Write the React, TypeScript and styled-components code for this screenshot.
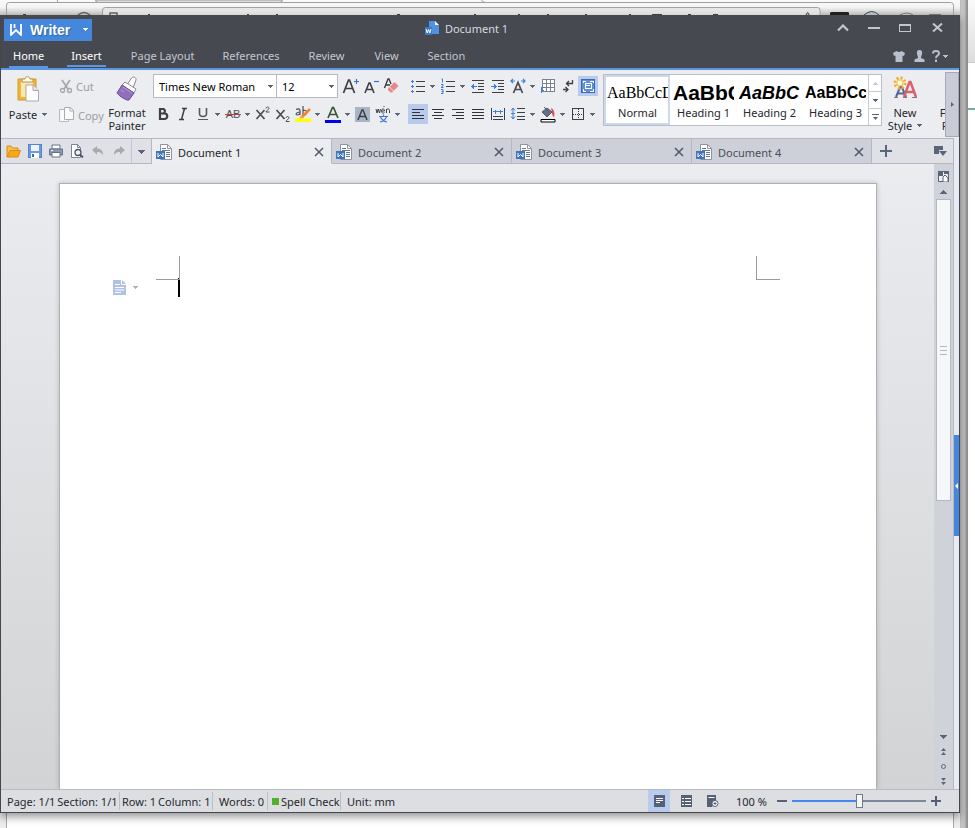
import React from "react";
import styled, { createGlobalStyle, css } from "styled-components";

const ui = `"Noto Sans", "DejaVu Sans", sans-serif`;
const ink = "#26282d";
const slate = "#5b6579";
const blue = "#3f7fd8";

const GlobalStyle = createGlobalStyle`
  *, *::before, *::after { box-sizing: border-box; }
  body { margin: 0; font: 11px/13px ${ui}; color: ${ink}; background: #fff; overflow: hidden; }
  button, select, input { font: inherit; color: inherit; margin: 0; padding: 0; border: 0; background: none; }
  svg { display: block; flex: none; }
`;

/* ---------- desktop behind the window ---------- */

const Desktop = styled.div`
  position: relative;
  display: flex;
  height: 100vh;
  padding: 15px 15px 15px 0;
`;

const Backdrop = styled.div`
  position: absolute;
  inset: 0;
  display: flex;
  background: linear-gradient(90deg, #9a9a9a, #c6c6c6 2px, #bdbdbd 6px, #9a9a9a 7px) right 8px top 0 / 8px 100% no-repeat, #fff;
`;

const BackBrowser = styled.div`
  flex: 1;
  display: flex;
  flex-direction: column;
  margin-right: 15px;
  background: #ececec;
`;

const BackTop = styled.div`
  height: 60px;
  background: linear-gradient(#fafafa, #f4f4f4 7px, #c4c4c4 15px);
`;

const BackPage = styled.div`
  flex: 1;
  margin: 0 6px 0 6px;
  border: solid #a8a8a8;
  border-width: 0 1px;
  background: #fff;
`;

const BackSide = styled.div`
  position: absolute;
  top: 0;
  right: 0;
  bottom: 0;
  width: 8px;
  border-left: 1px solid #8f8f8f;
  background: linear-gradient(#fafafa, #ddd 62px, #999 62px, #fff 63px, #fff 108px, #6fae98 108px, #6fae98 110px, #fff 110px);
`;

const BackArt = styled.svg`
  position: absolute;
  top: 0;
  left: 0;
`;

const Window = styled.main`
  position: relative;
  flex: 1;
  min-width: 0;
  display: flex;
  flex-direction: column;
  border: 1px solid #44474f;
  border-top: 0;
  background: #ebedf0;
  box-shadow: 0 4px 8px rgba(0, 0, 0, 0.4);
`;

/* ---------- title and menus ---------- */

const Header = styled.header`
  background: #464950;
  border-bottom: 2px solid #5a96e4;
  color: #d6d9e0;
`;

const TitleBar = styled.div`
  display: grid;
  grid-template-columns: 1fr auto 1fr;
  align-items: center;
  height: 29px;
  padding: 0 4px 0 3px;
`;

const WriterButton = styled.button`
  display: flex;
  align-items: center;
  width: 88px;
  height: 22px;
  padding: 0 4px 0 6px;
  background: #4487dc;
  color: #fff;
  font: bold 14px/20px "Liberation Sans", sans-serif;
  text-shadow: 1px 1px 1px #33689f;
  span { flex: 1; padding-left: 8px; text-align: left; }
`;

const Caption = styled.h1`
  display: flex;
  align-items: center;
  gap: 5px;
  margin: 0 26px 2px 0;
  font: inherit;
`;

const WindowControls = styled.div`
  display: flex;
  justify-content: flex-end;
  margin-bottom: 4px;
  color: #c0c5d0;
`;

const ControlButton = styled.button<{ $w?: number }>`
  display: flex;
  align-items: center;
  justify-content: center;
  width: ${(p) => p.$w ?? 31}px;
  height: 22px;
`;

const MenuBar = styled.nav`
  display: flex;
  align-items: stretch;
  height: 24px;
  padding: 0 8px 0 8px;
`;

const MenuItem = styled.button<{ $on?: boolean; $gap: number }>`
  height: 24px;
  padding: 2px 4px 1px;
  margin-right: ${(p) => p.$gap}px;
  white-space: nowrap;
  color: ${(p) => (p.$on ? "#fff" : "#c3c7d0")};
  border-bottom: 2px solid ${(p) => (p.$on ? "#5a96e4" : "transparent")};
  &:nth-of-type(2) { height: 23px; }
`;

const MenuTools = styled.div`
  display: flex;
  align-items: center;
  margin-left: auto;
  color: #b9bfcc;
`;

/* ---------- ribbon ---------- */

const Ribbon = styled.section`
  display: flex;
  height: 68px;
  background: #ebedf0;
`;

const RibbonBody = styled.div`
  flex: 1;
  min-width: 0;
  display: flex;
  align-items: flex-start;
  overflow: hidden;
  padding-top: 4px;
  > * { flex: none; }
`;

const BigButton = styled.button<{ $w: number; $gap?: number }>`
  display: flex;
  flex-direction: column;
  align-items: center;
  width: ${(p) => p.$w}px;
  padding-top: 2px;
  gap: ${(p) => p.$gap ?? 4}px;
  white-space: nowrap;
`;

const BigLabel = styled.span`
  display: flex;
  align-items: center;
  gap: 5px;
`;

const Lines = styled.span`
  display: flex;
  flex-direction: column;
  align-items: center;
`;

const ClipColumn = styled.div`
  display: flex;
  flex-direction: column;
  gap: 5px;
  width: 46px;
  margin-left: 4px;
`;

const ClipButton = styled.button`
  display: flex;
  align-items: center;
  gap: 3px;
  height: 24px;
  color: #9a9da4;
`;

const PainterButton = styled(BigButton)`
  margin-right: 4px;
`;

const Group = styled.div<{ $gap?: number }>`
  display: flex;
  flex-direction: column;
  gap: 6px;
  margin-right: ${(p) => p.$gap ?? 0}px;
`;

const ToolRow = styled.div<{ $h: number }>`
  display: flex;
  align-items: center;
  height: ${(p) => p.$h}px;
`;

const ToolButton = styled.button<{ $on?: boolean }>`
  display: flex;
  align-items: center;
  justify-content: center;
  width: 20px;
  height: 20px;
  background: ${(p) => (p.$on ? "#b9cbec" : "none")};
`;

const DropButton = styled.button`
  display: flex;
  align-items: center;
  width: 10px;
  height: 20px;
  padding-left: 2px;
`;

const Combo = styled.label<{ $w: number }>`
  display: grid;
  align-items: center;
  width: ${(p) => p.$w}px;
  height: 24px;
  border: 1px solid #b5bac5;
  background: #fff;
  & + & { border-left: 0; margin-right: 3px; }
  > * { grid-area: 1 / 1; }
  svg { justify-self: end; margin-right: 3px; pointer-events: none; }
  select { appearance: none; width: 100%; height: 22px; padding-left: 5px; outline: 0; color: #000; }
`;

const Gallery = styled.div`
  display: flex;
  height: 52px;
  border: 1px solid #b9bdc6;
  background: #fff;
`;

const StyleCell = styled.button<{ $on?: boolean }>`
  display: flex;
  flex-direction: column;
  width: 66px;
  height: 50px;
  padding: 2px 0 0 1px;
  border: 2px solid ${(p) => (p.$on ? "#c9d9f2" : "transparent")};
`;

const Sample = styled.span<{ $font: string }>`
  width: 100%;
  height: 27px;
  overflow: hidden;
  text-align: left;
  color: #000;
  font: ${(p) => p.$font};
`;

const CellName = styled.span`
  width: 100%;
  text-align: center;
  white-space: nowrap;
`;

const GalleryScroll = styled.div`
  display: flex;
  flex-direction: column;
  width: 13px;
  border-left: 1px solid #c6cad2;
  button { flex: 1; display: grid; place-items: center; }
  button + button { border-top: 1px solid #c6cad2; }
`;

const Expander = styled.button`
  display: grid;
  place-items: center;
  width: 14px;
  margin: 2px 0 1px;
  border: 1px solid #a5aab6;
  background: #c9ccd6;
`;

/* ---------- document tabs ---------- */

const Body = styled.div`
  flex: 1;
  min-height: 0;
  display: flex;
`;

const Main = styled.div`
  flex: 1;
  min-width: 0;
  display: flex;
  flex-direction: column;
`;

const TabRow = styled.div`
  display: flex;
  height: 26px;
  border-top: 1px solid #b4b8c2;
`;

const bar = css`
  background: #dfe1e6;
  border-bottom: 1px solid #b4b8c2;
`;

const QuickAccess = styled.div`
  ${bar}
  display: flex;
  width: 151px;
  padding-left: 2px;
  border-right: 1px solid #b4b8c2;
  button { width: 21px; height: 24px; display: grid; place-items: center; }
  button:last-child { width: 19px; height: 25px; border-left: 1px solid #c2c6cf; margin-left: 2px; }
`;

const Tab = styled.div<{ $on?: boolean }>`
  flex: 0 1 180px;
  display: flex;
  align-items: center;
  min-width: 0;
  padding: 2px 6px 0 4px;
  border-right: 1px solid #b4b8c2;
  border-bottom: 1px solid ${(p) => (p.$on ? "#ebedf0" : "#b4b8c2")};
  background: ${(p) => (p.$on ? "#ebedf0" : "#cdd0d8")};
  color: ${(p) => (p.$on ? ink : "#4b4e55")};
`;

const TabTitle = styled.button`
  flex: 1;
  display: flex;
  align-items: center;
  gap: 6px;
  white-space: nowrap;
`;

const IconButton = styled.button<{ $w: number }>`
  display: grid;
  place-items: center;
  width: ${(p) => p.$w}px;
  height: 24px;
`;

const TabEnd = styled.div`
  ${bar}
  flex: 1;
  display: flex;
  justify-content: space-between;
  border-right: 1px solid #b4b8c2;
`;

/* ---------- document ---------- */

const Work = styled.div`
  flex: 1;
  min-height: 0;
  display: flex;
`;

const Canvas = styled.div`
  flex: 1;
  display: flex;
  padding: 19px 57px 0 58px;
  overflow: hidden;
  background: linear-gradient(#ebecef, #d2d3d5);
`;

const Page = styled.article`
  position: relative;
  flex: 1;
  padding: 72px 96px 0;
  border: 1px solid #afb0b4;
  border-bottom: 0;
  background: #fff;
  box-shadow: 0 0 5px rgba(0, 0, 0, 0.2);
`;

const Margins = styled.div`
  display: flex;
  justify-content: space-between;
`;

const Corner = styled.span<{ $right?: boolean }>`
  width: 24px;
  height: 24px;
  border: solid #9b9b9b;
  border-width: ${(p) => (p.$right ? "0 0 1px 1px" : "0 1px 1px 0")};
`;

const Caret = styled.div`
  width: 24px;
  height: 19px;
  margin-top: -2px;
  border-right: 2px solid #000;
`;

const SmartTag = styled.button`
  position: absolute;
  top: 96px;
  left: 53px;
  display: flex;
  align-items: center;
  gap: 7px;
`;

const ScrollColumn = styled.div`
  display: flex;
  flex-direction: column;
  align-items: center;
  width: 20px;
  padding-top: 5px;
  border-right: 1px solid #b4b8c2;
  background: #d0d2d9;
  button { display: grid; place-items: center; width: 15px; height: 15px; }
`;

const ScrollTrack = styled.div`
  flex: 1;
  width: 15px;
`;

const ScrollThumb = styled.div`
  display: flex;
  flex-direction: column;
  align-items: center;
  justify-content: center;
  gap: 3px;
  height: 57%;
  border: 1px solid #b6b8bf;
  background: #f6f7f9;
  i { width: 7px; height: 1px; background: #b6b8bf; }
`;

const SideStrip = styled.aside`
  display: flex;
  flex-direction: column;
  justify-content: center;
  width: 5px;
  padding-top: 44px;
  background: #e9ebf2;
  button { height: 101px; background: #4487dc; display: grid; place-items: center; }
`;

/* ---------- status bar ---------- */

const Status = styled.footer`
  display: flex;
  align-items: center;
  height: 23px;
  padding: 0 17px 0 0;
  border-top: 1px solid #b9bbc2;
  background: #dcdee2;
  white-space: nowrap;
`;

const StatusItem = styled.span<{ $w: number; $pad: number }>`
  display: flex;
  align-items: center;
  gap: 2px;
  width: ${(p) => p.$w}px;
  height: 18px;
  padding-left: ${(p) => p.$pad}px;
  border-right: 1px solid #bcbfc6;
  &:last-of-type { border-right: 0; }
`;

const Led = styled.i`
  width: 7px;
  height: 7px;
  background: #52b02c;
`;

const StatusTools = styled.div`
  display: flex;
  align-items: center;
  margin-left: auto;
`;

const ViewButton = styled.button<{ $on?: boolean }>`
  display: grid;
  place-items: center;
  width: 22px;
  height: 22px;
  margin-right: 5px;
  background: ${(p) => (p.$on ? "#b9cbec" : "none")};
`;

const ZoomLabel = styled.output`
  width: 40px;
  margin-left: 7px;
`;

const Zoom = styled.input`
  appearance: none;
  width: 134px;
  height: 14px;
  margin: 0 4px;
  background: linear-gradient(90deg, #4487ee 50%, #7c8797 50%) center / 100% 2px no-repeat;
  &::-webkit-slider-thumb {
    appearance: none;
    width: 7px;
    height: 14px;
    border: 1px solid #747b88;
    background: #f7f7f8;
  }
`;

/* ---------- icons ---------- */

const Svg = ({ w = 16, h = w, crisp = false, children }: { w?: number; h?: number; crisp?: boolean; children: React.ReactNode }) => (
  <svg width={w} height={h} viewBox={`0 0 ${w} ${h}`} fill="none" aria-hidden="true" shapeRendering={crisp ? "crispEdges" : undefined}>
    {children}
  </svg>
);

const Arrow = ({ c = slate }: { c?: string }) => (
  <Svg w={5} h={3} crisp><path d="M0 0h5v1H4v1H3v1H2V2H1V1H0z" fill={c} /></Svg>
);

const WideArrow = () => (
  <Svg w={7} h={4} crisp><path d="M0 0h7v1H6v1H5v1H4v1H3V3H2V2H1V1H0z" fill={slate} /></Svg>
);

const ArrowUp = ({ c = slate }: { c?: string }) => (
  <Svg w={7} h={4} crisp><path d="M0 4h7V3H6V2H5V1H4V0H3v1H2v1H1v1H0z" fill={c} /></Svg>
);

const PasteIcon = () => (
  <Svg w={24} h={26}>
    <path d="M2 3h18v21H2z" fill="#eeb63c" stroke="#d59b25" />
    <path d="M5 6h12v15H5z" fill="#fbe6ab" />
    <path d="M6 6V3h3c0-3 5-3 5 0h3v3z" fill="#fff" stroke="#b9933f" />
    <path d="M10 9h7l5.500 5.500V25H10z" fill="#fff" stroke="#a9a9a9" />
    <path d="M17 9v5.500h5.500" stroke="#a9a9a9" fill="#e8e8e8" />
  </Svg>
);
const CutIcon = () => (
  <Svg w={14} h={15}>
    <path d="M3 1l6 9M11 1L5 10" stroke="#a4a7ad" strokeWidth="1.7" />
    <circle cx="3.5" cy="11.5" r="2" stroke="#a4a7ad" strokeWidth="1.3" />
    <circle cx="10.5" cy="11.5" r="2" stroke="#a4a7ad" strokeWidth="1.3" />
  </Svg>
);
const CopyIcon = () => (
  <Svg w={16} h={16}>
    <path d="M.5 2.500h6l3 3v9h-9z" fill="#fafafa" stroke="#b4b7bd" />
    <path d="M5.500.5h6l3 3v9h-9z" fill="#fafafa" stroke="#a9acb2" />
    <path d="M11 .5v3.500h3.500" stroke="#a9acb2" />
  </Svg>
);
const PainterIcon = () => (
  <Svg w={22} h={26}>
    <path d="M11 9l4.500-7c1.500-2 5-.5 4.500 2l-3 8z" fill="#fdfdfd" stroke="#8d8a98" />
    <path d="M9 6l11 7-2 4L6 9z" fill="#fff" stroke="#8d8a98" />
    <path d="M6 9l12 8-5 7c-2 1-9-3-12-7z" fill="#8f70ba" stroke="#6e509c" />
    <path d="M7 11l9 6M5 14l3 2" stroke="#b79fd6" />
  </Svg>
);
const FontSizeIcon = ({ up }: { up?: boolean }) => (
  <Svg w={18} h={18}>
    {up
      ? <path d="M1.500 16L6.500 3h1l5 13M3.500 11.500h7" stroke="#3c3f45" strokeWidth="1.7" />
      : <path d="M3 16L7 6h1l4 10M4.500 12.500h6" stroke="#3c3f45" strokeWidth="1.6" />}
    <path d={up ? "M12 4.500h5M14.500 2v5" : "M12 4.500h5"} stroke="#3c6fc4" strokeWidth="1.2" />
  </Svg>
);
const EraserIcon = () => (
  <Svg w={16} h={16}>
    <path d="M1.500 10L5 1h1l2 5M3 7h4" stroke="#3c3f45" strokeWidth="1.4" />
    <path d="M5 10.500l6.500-6.500 4 4L9 14.500H7.500l-2.500-2.500z" fill="#e58a8a" />
    <path d="M6.500 9l4 4" stroke="#f7dcdc" />
  </Svg>
);
const ItalicIcon = () => <Svg w={12} h={14}><path d="M5 1.500h5M2 12.500h5M7.500 1.500l-3 11" stroke="#3c3f45" strokeWidth="1.5" /></Svg>;
const BoldIcon = () => <Svg w={12} h={14}><path d="M3 2h3.500a2.500 2.500 0 010 4.500H3zm0 4.500h4.500a2.700 2.700 0 010 5.500H3z" stroke="#3c3f45" strokeWidth="2.2" /></Svg>;
const UnderIcon = () => <Svg w={12} h={14}><path d="M2.500 1v5.500c0 4 7 4 7 0V1" stroke="#55585f" strokeWidth="1.6" /><path d="M1 12.500h10" stroke="#55585f" /></Svg>;
const Struck = styled.span`
  position: relative;
  color: #4a4d53;
  font: 11px/14px "Liberation Sans", sans-serif;
  &::after { content: ""; position: absolute; left: -1px; right: -1px; top: 7px; height: 1px; background: #d5383c; }
`;
const ScriptIcon = ({ sup }: { sup?: boolean }) => (
  <Svg w={16} h={16}>
    <path d="M1.500 4l8 9M9.500 4l-8 9" stroke="#4a4d53" strokeWidth="1.7" />
    <path d={sup ? "M11 2.500c0-2 3-2 3 0 0 1-3 2-3 3.500h3.500" : "M11 12c0-2 3-2 3 0 0 1-3 2-3 3.500h3.500"} stroke="#4a4d53" />
  </Svg>
);
const HighlightIcon = () => (
  <Svg w={16} h={16}>
    <path d="M1 3.500c3-1.500 4 0 4 1.500v4M5 6C1 6 0 9 2.500 9 4 9 5 8 5 7M8 0v9c5 .5 5-6 0-4.500" stroke="#4a4d53" strokeWidth="1.2" />
    <path d="M15 3L7 11" stroke="#ef8432" strokeWidth="2.5" />
    <path d="M4 13l2-4 3 3z" fill="#f6a84f" />
    <path d="M0 12.500h16V16H0z" fill="#ff0" />
  </Svg>
);
const ColorIcon = () => (
  <Svg w={16} h={17}>
    <path d="M3 12L7.500 1.500h1L13 12M4.500 8.500h7" stroke="#38563c" strokeWidth="1.7" />
    <path d="M0 14h16v3H0z" fill="#0000f0" />
  </Svg>
);
const ShadeIcon = () => (
  <Svg w={16} h={16}>
    <path d="M0 1h15v15H0z" fill="#a9b4c6" />
    <path d="M3 14L7 4h1l4 10M4.500 10.500h6" stroke="#3c3f45" strokeWidth="1.5" />
  </Svg>
);
const WenIcon = () => (
  <Svg w={16} h={17}>
    <path d="M1 3l1 4 1.200-4L4.500 7l1-4M6.500 5h3c0-3-3-2.500-3 0s2 2.500 3 1.500M11.500 7V3M11.500 4c1-2 3-1 3 .5V7M8.500 1l1-1" stroke="#3c3f45" />
    <path d="M4 10.500h9M8.500 8.500v2M5.500 11c1.500 3 4 4.500 6.500 5M11.500 11c-1.500 3-4 4.500-6.500 5" stroke="#4478cc" strokeWidth="1.2" />
  </Svg>
);
const BulletsIcon = () => (
  <Svg w={16} h={16} crisp>
    <path d="M6 3.500h9M6 8.500h9M6 13.500h9" stroke="#3c3f45" />
    <path d="M1 3.500h3M2.500 2v3M1 8.500h3M2.500 7v3M1 13.500h3M2.500 12v3" stroke={blue} />
  </Svg>
);
const NumbersIcon = () => (
  <Svg w={16} h={16}>
    <path d="M6 3.500h9M6 8.500h9M6 13.500h9" stroke="#3c3f45" />
    <path d="M1.500 1h1v3.500M1 6.500h2v1.500l-2 1.500h2.500M1 11.500h2v4H1M1.500 13.500H3" stroke={blue} />
  </Svg>
);
const IndentIcon = ({ out }: { out?: boolean }) => (
  <Svg w={14} h={14} crisp>
    <path d="M1 1.500h12M7 4.500h6M7 7.500h6M7 10.500h6M1 13.500h12" stroke="#3c3f45" />
    <path d={out ? "M0 7.500h6M2.500 5v5M1.500 6v3" : "M0 7.500h6M3.500 5v5M4.500 6v3"} stroke={blue} />
  </Svg>
);
const SpreadIcon = () => (
  <Svg w={16} h={16}>
    <path d="M3.500 15L8 4.500 12.500 15M5 11.500h6" stroke="#4a4d53" strokeWidth="1.7" />
    <path d="M1 3h4M3 1L1 3l2 2M11 3h4M13 1l2 2-2 2" stroke={blue} strokeWidth="1.2" />
  </Svg>
);
const TableIcon = () => (
  <Svg w={16} h={16} crisp>
    <path d="M2 1.500h12v12H2zM2 5.500h12M2 9.500h12M6.500 1v12M10.500 1v12" stroke="#7a8290" fill="#fff" />
    <path d="M1.500 15V9.500H6M1.500 12H4" stroke={blue} />
  </Svg>
);
const BreakIcon = () => (
  <Svg w={14} h={16}>
    <path d="M11.500 2v3.500H6M8 3L5.500 5.500 8 8M2 11.500h5M4.500 9L7 11.500 4.500 14" stroke="#3c3f45" strokeWidth="1.3" />
  </Svg>
);
const FrameIcon = () => (
  <Svg w={16} h={16} crisp>
    <path d="M1.500 1.500h13v13h-13z" stroke="#3a69b5" fill="#5d8fd8" />
    <path d="M3 5V3h3M10 3h3v2M3 11v2h3M10 13h3v-2M5 5.500h6v5H5zM6 7.500h4" stroke="#fff" />
  </Svg>
);
const AlignIcon = ({ d }: { d: string }) => <Svg w={12} h={12} crisp><path d={d} stroke="#2f3237" /></Svg>;
const DistributeIcon = () => (
  <Svg w={16} h={14} crisp>
    <path d="M1.500 1v12M14.500 1v12M3 9.500h10M3 12.500h10" stroke="#3c3f45" />
    <path d="M3 4.500h10M5.500 2.500v4M10.500 2.500v4" stroke={blue} />
  </Svg>
);
const SpacingIcon = () => (
  <Svg w={16} h={14}>
    <path d="M7 1.500h8M7 5.500h8M7 9.500h8M7 12.500h8" stroke="#3c3f45" />
    <path d="M3 1v11M1 3.500L3 1l2 2.500M1 9.500L3 12l2-2.500M1 6.500h4" stroke={blue} />
  </Svg>
);
const FillIcon = () => (
  <Svg w={16} h={17}>
    <path d="M2 6l5-4 5 4-5 5z" fill="#66718a" stroke="#515b70" />
    <path d="M4 1l4 4" stroke="#515b70" />
    <path d="M11 2c3 1 4 5 3 9-2-1-2-4-2-5z" fill="#d8504f" />
    <path d="M1 13.500h14v2.500H1z" fill="#fff" stroke="#000" />
  </Svg>
);
const BorderIcon = () => (
  <Svg w={14} h={14} crisp>
    <path d="M1.500 1.500h11v11h-11z" stroke="#3c3f45" />
    <path d="M7 2v10M2 7h10" stroke="#3c3f45" strokeDasharray="1 1" />
  </Svg>
);
const NewStyleIcon = () => (
  <Svg w={24} h={26}>
    <path d="M3 21L7.500 10h1L13 21M5 17.500h6" stroke="#4f6795" strokeWidth="2" />
    <path d="M11 21l5.500-15h1L23 21M13.500 16h7" stroke="#d9616d" strokeWidth="2.5" />
    <path d="M1 21.500h4M10 21.500h4M19 21.500h5" stroke="#8c6c88" />
    <circle cx="7" cy="7" r="5" stroke="#f2ab2c" strokeWidth="3" strokeDasharray="2 1.9" />
    <circle cx="7" cy="7" r="3" fill="#fff7d6" stroke="#f5c451" />
  </Svg>
);
const WordDoc = () => (
  <Svg w={16} h={17}>
    <path d="M4.500.5h7l4 4v11h-11z" fill="#fff" stroke="#8b93a3" />
    <path d="M11.500.5v4h4" stroke="#8b93a3" />
    <path d="M6 4.500h4M6 6.500h8M10 8.500h4M10 10.500h4M10 12.500h4" stroke="#6d7789" />
    <path d="M0 7h9v8H0z" fill="#3f75bf" />
    <path d="M2 9v4l2.500-2.500L7 13V9" stroke="#fff" />
  </Svg>
);
const AppDoc = () => (
  <Svg w={15} h={15}>
    <path d="M4 0h6l4 4v9H4z" fill="#4f92e2" />
    <path d="M10 0v4h4z" fill="#fff" />
    <path d="M0 6h7v8H0z" fill="#3c78c8" />
    <path d="M1 8l1.200 4 1.300-3.500L4.800 12 6 8" stroke="#fff" />
  </Svg>
);
const FolderIcon = () => (
  <Svg w={15} h={13}>
    <path d="M1 12V1h4l1.500 2H12v3" fill="#f6c04f" stroke="#d88d14" />
    <path d="M1 12L4 5.500h10.500L12 12z" fill="#f8a81d" stroke="#dd8a10" />
  </Svg>
);
const SaveIcon = () => (
  <Svg w={14} h={14} crisp>
    <path d="M.5.5h13v13H.5z" fill="#6c9ae0" stroke="#5582c8" />
    <path d="M3 1h8v6H3z" fill="#eef3fb" /><path d="M3 9h8v5H3z" fill="#fff" /><path d="M4 10h2v3H4z" fill="#3c6cb4" />
  </Svg>
);
const PrintIcon = () => (
  <Svg w={14} h={14}>
    <path d="M3 1h8v4H3z" fill="#fff" stroke="#667084" />
    <path d="M.5 5h13v6H.5z" fill="#8a9ab6" stroke="#65728c" />
    <path d="M3 8.500h8v4.500H3z" fill="#fff" stroke="#667084" />
    <path d="M2 6.500h2" stroke="#fff" />
  </Svg>
);
const PreviewIcon = () => (
  <Svg w={14} h={14}>
    <path d="M1.500.5h6l3 3v10h-9z" fill="#fff" stroke="#7e8694" /><path d="M7.500.5v3h3" stroke="#7e8694" />
    <circle cx="8" cy="8.5" r="3" fill="#eef0f4" stroke="#4c5566" strokeWidth="1.3" /><path d="M10 10.500l3 3" stroke="#4c5566" strokeWidth="1.8" />
  </Svg>
);
const UndoIcon = ({ flip }: { flip?: boolean }) => (
  <Svg w={12} h={12}>
    <g transform={flip ? "matrix(-1 0 0 1 12 0)" : undefined}><path d="M0 5l5-4v2.500c4 0 6 2 6 7-1.500-3-3-3.500-6-3.500v2.500z" fill="#a5a9b1" /></g>
  </Svg>
);
const CloseIcon = () => <Svg w={10} h={10}><path d="M1 1l8 8M9 1L1 9" stroke="#4e586a" strokeWidth="1.5" /></Svg>;

const alignments: [string, string][] = [
  ["Align left", "M0 1.500h12M0 4.500h8M0 7.500h12M0 10.500h12"],
  ["Center", "M0 1.500h12M2 4.500h8M0 7.500h12M2 10.500h8"],
  ["Align right", "M0 1.500h12M4 4.500h8M0 7.500h12M4 10.500h8"],
  ["Justify", "M0 1.500h12M0 4.500h12M0 7.500h12M0 10.500h12"],
];

const menus: [string, number][] = [
  ["Home", 19], ["Insert", 21], ["Page Layout", 20], ["References", 21], ["Review", 22], ["View", 21], ["Section", 0],
];

const styles: [string, string, string][] = [
  ["Normal", "AaBbCcD", `16px/28px "Liberation Serif", serif`],
  ["Heading 1", "AaBbC", `bold 21px/28px "Liberation Sans", sans-serif`],
  ["Heading 2", "AaBbC", `italic bold 18px/28px "Liberation Sans", sans-serif`],
  ["Heading 3", "AaBbCc", `bold 16px/28px "Liberation Sans", sans-serif`],
];

const Tool = ({ name, drop, on, children }: { name: string; drop?: boolean; on?: boolean; children: React.ReactNode }) => (
  <>
    <ToolButton aria-label={name} $on={on}>{children}</ToolButton>
    {drop && <DropButton aria-label={`${name} options`}><Arrow /></DropButton>}
  </>
);

export default function App() {
  return (
    <Desktop>
      <GlobalStyle />
      <Backdrop aria-hidden="true">
        <BackBrowser><BackTop /><BackPage /></BackBrowser>
        <BackSide />
        <BackArt width="960" height="15" viewBox="0 0 960 15" fill="none">
          <path d="M6.500 15V5q0-2.500 3-2.500h941q3 0 3 3V15" stroke="#a0a0a0" />
          <path d="M57.500 0v2M95.500 0q0 2.500 3 2.500h181q3 0 3-2.500z" fill="#dcdde0" stroke="#a0a0a0" />
          <path d="M481.500 0q1 2.500 4 2.500H948" stroke="#a0a0a0" />
          <path d="M102.500 15V10q0-2.500 3-2.500h712q2.500 0 2.500 2.500v5" fill="#e6e6e6" stroke="#a0a0a0" />
          <path d="M78 15q6-5 12 0M110 15v-2h7v2" stroke="#666" strokeWidth="1.5" />
          <path d="M23 14.500h3M148 14.500h2M247 14.500h2M276 14.500h2M397 14.500h3M474 14.500h2M518 14.500h2M547 14.500h2M585 14.500h2M629 14.500h2M652 14.500h10M688 14.500h3M713 14.500h5" stroke="#444" />
          <path d="M830 15v-2q0-1 2-1h15q2 0 2 1v2z" fill="#222" />
          <path d="M864 15q8-7 15 0M806 15q2-5 3 0" stroke="#444" fill="#bcc3d0" />
          <path d="M900 15q7-4 13 0M929 14.500h12" stroke="#777" />
        </BackArt>
      </Backdrop>

      <Window>
        <Header>
          <TitleBar>
            <WriterButton>
              <Svg w={12} h={13}><path d="M1 1v11l5-5 5 5V1M4.500 1v4" stroke="#fff" strokeWidth="1.8" /></Svg>
              <span>Writer</span>
              <Arrow c="#fff" />
            </WriterButton>
            <Caption><AppDoc />Document 1</Caption>
            <WindowControls>
              <ControlButton $w={30} aria-label="Collapse ribbon"><Svg w={12} h={8}><path d="M1 6.500l5-5 5 5" stroke="currentColor" strokeWidth="2.2" /></Svg></ControlButton>
              <ControlButton aria-label="Minimize"><Svg w={12} h={2}><path d="M0 1h12" stroke="currentColor" strokeWidth="2" /></Svg></ControlButton>
              <ControlButton aria-label="Maximize"><Svg w={12} h={8} crisp><path d="M.5.5h11v7H.5zM0 1.500h12" stroke="currentColor" /></Svg></ControlButton>
              <ControlButton $w={35} aria-label="Close"><Svg w={11} h={9}><path d="M1 .5l9 8M10 .5l-9 8" stroke="currentColor" strokeWidth="2" /></Svg></ControlButton>
            </WindowControls>
          </TitleBar>
          <MenuBar>
            {menus.map(([m, gap], i) => <MenuItem key={m} $on={i < 2} $gap={gap}>{m}</MenuItem>)}
            <MenuTools>
              <ControlButton $w={20} aria-label="Skins"><Svg w={12} h={11}><path d="M3.500 0q2.500 2 5 0L12 2l-1 3-1.500-.5V11h-7V4.500L1 5 0 2z" fill="currentColor" /></Svg></ControlButton>
              <ControlButton $w={20} aria-label="Account"><Svg w={11} h={12}><path d="M5.500 0C8 0 8.500 2 8 4S7 6.500 7 8l3.500 1.500V12H.5V9.500L4 8c0-1.500-.5-2-1-4S3 0 5.500 0z" fill="currentColor" /></Svg></ControlButton>
              <ControlButton $w={22} aria-label="Help">
                <Svg w={8} h={12}><path d="M1 3.500c0-3.300 6-3.300 6 0 0 2-3 2.200-3 4.500M4 9.500V12" stroke="currentColor" strokeWidth="2" /></Svg>
                <Svg w={8} h={3} crisp><path d="M3 0h5v1H7v1H6v1H5V2H4V1H3z" fill="currentColor" /></Svg>
              </ControlButton>
            </MenuTools>
          </MenuBar>
        </Header>

        <Ribbon>
          <RibbonBody>
            <BigButton $w={54} $gap={6}><PasteIcon /><BigLabel>Paste<Arrow /></BigLabel></BigButton>
            <ClipColumn>
              <ClipButton disabled><CutIcon />Cut</ClipButton>
              <ClipButton disabled><CopyIcon />Copy</ClipButton>
            </ClipColumn>
            <PainterButton $w={44}><PainterIcon /><Lines><span>Format</span><span>Painter</span></Lines></PainterButton>
            <Group $gap={5}>
              <ToolRow $h={24}>
                <Combo $w={124}><select aria-label="Font"><option>Times New Roman</option></select><Arrow /></Combo>
                <Combo $w={61}><select aria-label="Font size"><option>12</option></select><Arrow /></Combo>
                <Tool name="Grow font"><FontSizeIcon up /></Tool>
                <Tool name="Shrink font"><FontSizeIcon /></Tool>
                <Tool name="Clear formatting"><EraserIcon /></Tool>
              </ToolRow>
              <ToolRow $h={20}>
                <Tool name="Bold"><BoldIcon /></Tool>
                <Tool name="Italic"><ItalicIcon /></Tool>
                <Tool name="Underline" drop><UnderIcon /></Tool>
                <Tool name="Strikethrough" drop><Struck>AB</Struck></Tool>
                <Tool name="Superscript"><ScriptIcon sup /></Tool>
                <Tool name="Subscript"><ScriptIcon /></Tool>
                <Tool name="Highlight" drop><HighlightIcon /></Tool>
                <Tool name="Font color" drop><ColorIcon /></Tool>
                <Tool name="Character shading"><ShadeIcon /></Tool>
                <Tool name="Phonetic guide" drop><WenIcon /></Tool>
              </ToolRow>
            </Group>
            <Group $gap={5}>
              <ToolRow $h={24}>
                <Tool name="Bullets" drop><BulletsIcon /></Tool>
                <Tool name="Numbering" drop><NumbersIcon /></Tool>
                <Tool name="Decrease indent"><IndentIcon out /></Tool>
                <Tool name="Increase indent"><IndentIcon /></Tool>
                <Tool name="Character scaling" drop><SpreadIcon /></Tool>
                <Tool name="Table"><TableIcon /></Tool>
                <Tool name="Show marks"><BreakIcon /></Tool>
                <Tool name="Page frame" on><FrameIcon /></Tool>
              </ToolRow>
              <ToolRow $h={20}>
                {alignments.map(([n, d], i) => <Tool key={n} name={n} on={i === 0}><AlignIcon d={d} /></Tool>)}
                <Tool name="Distribute"><DistributeIcon /></Tool>
                <Tool name="Line spacing" drop><SpacingIcon /></Tool>
                <Tool name="Shading" drop><FillIcon /></Tool>
                <Tool name="Borders" drop><BorderIcon /></Tool>
              </ToolRow>
            </Group>
            <Gallery>
              {styles.map(([name, sample, font], i) => (
                <StyleCell key={name} $on={i === 0}>
                  <Sample $font={font}>{sample}</Sample>
                  <CellName>{name}</CellName>
                </StyleCell>
              ))}
              <GalleryScroll>
                <button aria-label="Previous styles"><Svg w={5} h={3} crisp><path d="M0 3h5V2H4V1H3V0H2v1H1v1H0z" fill="#c6cad2" /></Svg></button>
                <button aria-label="Next styles"><Arrow /></button>
                <button aria-label="All styles"><Svg w={7} h={7}><path d="M0 .5h7" stroke={slate} /><path d="M1 3h5L3.500 6z" fill={slate} /></Svg></button>
              </GalleryScroll>
            </Gallery>
            <BigButton $w={46}><NewStyleIcon /><Lines><span>New</span><BigLabel>Style<Arrow /></BigLabel></Lines></BigButton>
            <BigButton $w={68} $gap={30}><span /><Lines><span>Find and</span><span>Replace</span></Lines></BigButton>
          </RibbonBody>
          <Expander aria-label="More tools"><Svg w={3} h={5}><path d="M0 0v5l3-2.500z" fill={slate} /></Svg></Expander>
        </Ribbon>

        <Body>
          <Main>
            <TabRow>
              <QuickAccess>
                <button aria-label="Open"><FolderIcon /></button>
                <button aria-label="Save"><SaveIcon /></button>
                <button aria-label="Print"><PrintIcon /></button>
                <button aria-label="Print preview"><PreviewIcon /></button>
                <button aria-label="Undo"><UndoIcon /></button>
                <button aria-label="Redo"><UndoIcon flip /></button>
                <button aria-label="Customize"><WideArrow /></button>
              </QuickAccess>
              {[1, 2, 3, 4].map((n) => (
                <Tab key={n} $on={n === 1}>
                  <TabTitle><WordDoc />Document {n}</TabTitle>
                  <IconButton $w={12} aria-label={`Close document ${n}`}><CloseIcon /></IconButton>
                </Tab>
              ))}
              <TabEnd>
                <IconButton $w={27} aria-label="New tab"><Svg w={12} crisp><path d="M0 6h12M6 0v12" stroke={slate} strokeWidth="2" /></Svg></IconButton>
                <IconButton $w={26} aria-label="Tab list"><Svg w={13} h={11}><path d="M0 0h9v4H5v4H0z" fill={slate} /><path d="M5 5h8L9 10z" fill={slate} /></Svg></IconButton>
              </TabEnd>
            </TabRow>
            <Work>
              <Canvas>
                <Page>
                  <Margins><Corner /><Corner $right /></Margins>
                  <Caret />
                  <SmartTag aria-label="Paragraph layout">
                    <Svg w={13} h={15}><path d="M0 0h9l4 4v11H0z" fill="#afc2e6" /><path d="M8.500 0v4.500H13M2 4.500h5M2 7.500h9M2 10h9M2 12.500h6" stroke="#fff" /></Svg>
                    <Arrow c="#aeb1b8" />
                  </SmartTag>
                </Page>
              </Canvas>
              <ScrollColumn>
                <button aria-label="Browse pane"><Svg w={11} h={11}><path d="M.5.5h10v10H.5z" stroke={slate} fill="#eceef2" /><path d="M0 0h5v5H0zM6 0h5v3H6z" fill={slate} /><path d="M5 11V6l2-2 3 3v4z" fill="#fff" stroke={slate} /></Svg></button>
                <button aria-label="Scroll up"><ArrowUp /></button>
                <ScrollTrack><ScrollThumb><i /><i /><i /></ScrollThumb></ScrollTrack>
                <button aria-label="Scroll down"><WideArrow /></button>
                <button aria-label="Previous page"><Svg w={5} h={7}><path d="M0 3h5L2.500 0zM0 7h5L2.500 4z" fill={slate} /></Svg></button>
                <button aria-label="Select browse object"><Svg w={5}><circle cx="2.5" cy="2.5" r="2" stroke={slate} /></Svg></button>
                <button aria-label="Next page"><Svg w={5} h={7}><path d="M0 0h5L2.500 3zM0 4h5L2.500 7z" fill={slate} /></Svg></button>
              </ScrollColumn>
            </Work>
          </Main>
          <SideStrip>
            <button aria-label="Open task pane"><Svg w={3} h={6}><path d="M3 0v6L0 3z" fill="#fff" /></Svg></button>
          </SideStrip>
        </Body>

        <Status>
          <StatusItem $w={119} $pad={6}><span>Page: 1/1</span><span>Section: 1/1</span></StatusItem>
          <StatusItem $w={93} $pad={2}><span>Row: 1</span><span>Column: 1</span></StatusItem>
          <StatusItem $w={55} $pad={6}>Words: 0</StatusItem>
          <StatusItem $w={73} $pad={4}><Led />Spell Check</StatusItem>
          <StatusItem $w={60} $pad={6}>Unit: mm</StatusItem>
          <StatusTools>
            <ViewButton $on aria-label="Print layout"><Svg w={11} h={12} crisp><path d="M0 0h11v12H0z" fill="#566074" /><path d="M2 3.500h7M2 5.500h7M2 7.500h4" stroke="#fff" /></Svg></ViewButton>
            <ViewButton aria-label="Outline"><Svg w={11} h={12} crisp><path d="M0 0h11v12H0z" fill="#566074" /><path d="M1 3.500h2M4 3.500h6M1 6.500h2M4 6.500h6M1 9.500h2M4 9.500h6" stroke="#fff" /></Svg></ViewButton>
            <ViewButton aria-label="Web layout"><Svg w={12} h={12}><path d="M0 0h9v5L5 12H0z" fill="#566074" /><path d="M1.500 2.500h6" stroke="#fff" /><circle cx="8" cy="8.5" r="3" fill="#fff" stroke="#566074" /><path d="M6.500 8.500h3M8 7v3" stroke="#566074" /></Svg></ViewButton>
            <ZoomLabel htmlFor="zoom">100 %</ZoomLabel>
            <IconButton $w={12} aria-label="Zoom out"><Svg w={10} h={2}><path d="M0 1h10" stroke="#566074" strokeWidth="2" /></Svg></IconButton>
            <Zoom id="zoom" type="range" min={0} max={200} defaultValue={100} aria-label="Zoom" />
            <IconButton $w={12} aria-label="Zoom in"><Svg w={10} crisp><path d="M0 5h10M5 0v10" stroke="#566074" strokeWidth="2" /></Svg></IconButton>
          </StatusTools>
        </Status>
      </Window>
    </Desktop>
  );
}
